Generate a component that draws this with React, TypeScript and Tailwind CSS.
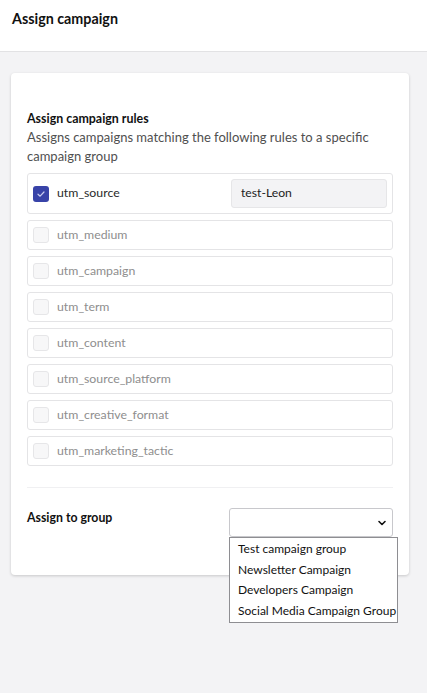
import React from "react";

const rules = [
  "utm_medium",
  "utm_campaign",
  "utm_term",
  "utm_content",
  "utm_source_platform",
  "utm_creative_format",
  "utm_marketing_tactic",
];

const groups = [
  "Test campaign group",
  "Newsletter Campaign",
  "Developers Campaign",
  "Social Media Campaign Group",
];

export default function App() {
  return (
    <div
      className="min-h-[693px] w-full bg-[#f3f3f5] text-[#1f1f1f]"
      style={{ fontFamily: "Lato, 'Open Sans', sans-serif" }}
    >
      <header className="h-[52px] bg-white border-b border-[#e2e2e4] pl-3 pt-[9px]">
        <h1 className="text-[14.3px] leading-5 font-bold text-[#111]">Assign campaign</h1>
      </header>

      <div className="px-[11px] pt-[21px]">
        <div className="relative w-[398px] bg-white rounded-[4px] shadow-[0_1px_3px_rgba(0,0,0,0.18)] px-4 pt-[37px] pb-[38px]">
          <h2 className="text-[12.4px] leading-[18px] font-bold text-[#111]">Assign campaign rules</h2>
          <p className="text-[13px] leading-[19px] text-[#505050]">
            Assigns campaigns matching the following rules to a specific campaign group
          </p>

          <div className="mt-[7px] flex flex-col gap-[6px]">
            <div className="h-[41px] flex items-center justify-between border border-[#e4e4e6] rounded-[3px] pl-[5px] pr-[5px]">
              <div className="flex items-center gap-2">
                <span className="w-4 h-4 rounded-[3px] bg-[#3843a8] flex items-center justify-center">
                  <svg width="10" height="10" viewBox="0 0 10 10" fill="none">
                    <path d="M2 5.2 L4.1 7.2 L8 3" stroke="#c9cdf0" strokeWidth="1.2" strokeLinecap="round" strokeLinejoin="round" />
                  </svg>
                </span>
                <span className="text-[12.3px] text-[#2a2a2a]">utm_source</span>
              </div>
              <div className="w-[156px] h-[29px] bg-[#f3f3f5] border border-[#e6e6e8] rounded-[3px] flex items-center pl-[9px] text-[12.2px] text-[#222]">
                test-Leon
              </div>
            </div>

            {rules.map((r) => (
              <div
                key={r}
                className="h-[30px] flex items-center gap-2 border border-[#e4e4e6] rounded-[3px] pl-[5px]"
              >
                <span className="w-4 h-4 rounded-[3px] bg-[#f7f7f8] border border-[#e6e6e8]" />
                <span className="text-[12.3px] text-[#8e8e8e]">{r}</span>
              </div>
            ))}
          </div>

          <div className="mt-[21px] border-t border-[#f0f0f2]" />

          <div className="mt-[20px] flex items-start justify-between">
            <span className="text-[12.3px] leading-[18px] font-bold text-[#111] pt-px">Assign to group</span>
            <div className="relative">
              <div className="w-[164px] h-[29px] bg-white border border-[#c8c8cc] rounded-[3px] flex items-center justify-end pr-[5px]">
                <svg width="10" height="10" viewBox="0 0 10 10" fill="none">
                  <path d="M2 3.5 L5 6.5 L8 3.5" stroke="#111" strokeWidth="1.6" strokeLinecap="round" strokeLinejoin="round" />
                </svg>
              </div>
              <div className="absolute left-0 top-[29px] w-[169px] bg-white border border-[#8e8e92] py-px z-10">
                {groups.map((g) => (
                  <div key={g} className="h-[20.5px] flex items-center pl-[8px] text-[12px] text-[#111] whitespace-nowrap">
                    {g}
                  </div>
                ))}
              </div>
            </div>
          </div>
        </div>
      </div>
    </div>
  );
}
